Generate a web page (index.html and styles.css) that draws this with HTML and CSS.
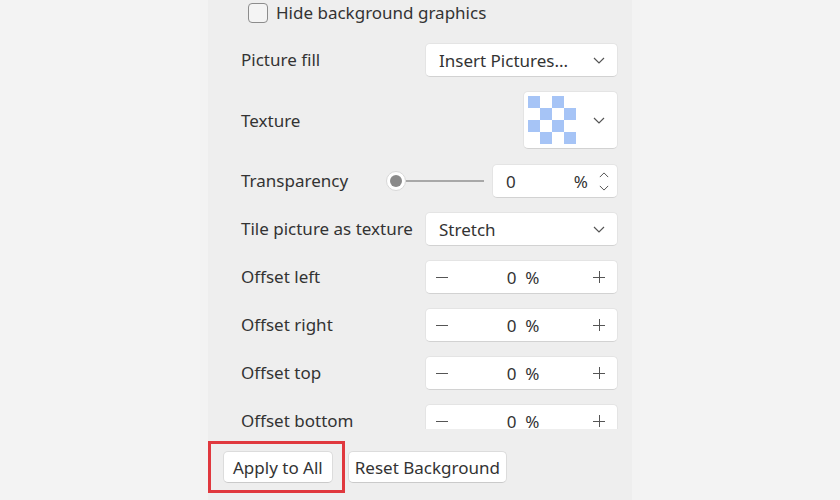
FILE: index.html
```html
<!DOCTYPE html>
<html>
<head>
<meta charset="utf-8">
<link rel="stylesheet" href="styles.css">
</head>
<body>
<div class="panel">
  <div class="scroll">
    <div class="check-row">
      <span class="checkbox"></span>
      <span class="check-label">Hide background graphics</span>
    </div>
    <div class="form">
      <div class="row">
        <div class="label">Picture fill</div>
        <div class="select wide"><span>Insert Pictures...</span><svg class="chev" viewBox="0 0 12 7"><path d="M1 1l5 5 5-5"/></svg></div>
      </div>

      <div class="row">
        <div class="label">Texture</div>
        <div class="select texture">
          <div class="checker">
            <b></b><i></i><b></b><i></i>
            <i></i><b></b><i></i><b></b>
            <b></b><i></i><b></b><i></i>
            <i></i><b></b><i></i><b></b>
          </div>
          <svg class="chev" viewBox="0 0 12 7"><path d="M1 1l5 5 5-5"/></svg>
        </div>
      </div>

      <div class="row">
        <div class="label">Transparency</div>
        <div class="trans">
          <div class="slider"><span class="knob"></span><span class="track"></span></div>
          <div class="spin">
            <span class="val">0</span><span class="pct">%</span>
            <span class="arrows">
              <svg viewBox="0 0 12 7"><path d="M1 6l5-5 5 5"/></svg>
              <svg viewBox="0 0 12 7"><path d="M1 1l5 5 5-5"/></svg>
            </span>
          </div>
        </div>
      </div>

      <div class="row">
        <div class="label">Tile picture as texture</div>
        <div class="select wide"><span>Stretch</span><svg class="chev" viewBox="0 0 12 7"><path d="M1 1l5 5 5-5"/></svg></div>
      </div>

      <div class="row">
        <div class="label">Offset left</div>
        <div class="stepper"><span class="minus"></span><span class="num">0&nbsp;&nbsp;%</span><span class="plus"></span></div>
      </div>

      <div class="row">
        <div class="label">Offset right</div>
        <div class="stepper"><span class="minus"></span><span class="num">0&nbsp;&nbsp;%</span><span class="plus"></span></div>
      </div>

      <div class="row">
        <div class="label">Offset top</div>
        <div class="stepper"><span class="minus"></span><span class="num">0&nbsp;&nbsp;%</span><span class="plus"></span></div>
      </div>

      <div class="row">
        <div class="label">Offset bottom</div>
        <div class="stepper"><span class="minus"></span><span class="num">0&nbsp;&nbsp;%</span><span class="plus"></span></div>
      </div>
    </div>
  </div>
  <div class="footer">
    <div class="highlight"><button class="btn">Apply to All</button></div>
    <button class="btn reset">Reset Background</button>
  </div>
</div>
</body>
</html>
```
FILE: styles.css
```css
* { box-sizing: border-box; }
html, body { margin: 0; padding: 0; }
body {
  background: #f3f3f3;
  font-family: "Noto Sans", "Open Sans", sans-serif;
  font-size: 17px;
  color: #333;
  width: 840px;
  height: 500px;
  overflow: hidden;
}
.panel {
  margin-left: 208px;
  width: 424px;
  height: 500px;
  background: #eeeeee;
  display: flex;
  flex-direction: column;
}
.scroll {
  height: 429px;
  overflow: hidden;
  padding: 3px 14px 0 33px;
}
.check-row {
  display: flex;
  align-items: center;
  gap: 8px;
  padding-left: 7px;
  height: 20px;
  margin-bottom: 20px;
}
.checkbox {
  width: 20px;
  height: 20px;
  border: 1.5px solid #8c8c8c;
  border-radius: 4px;
  background: #f4f4f4;
  flex: none;
}
.check-label { line-height: 20px; white-space: nowrap; }
.form {
  display: flex;
  flex-direction: column;
  gap: 14px;
}
.row {
  display: flex;
  align-items: center;
  justify-content: space-between;
}
.label { line-height: 20px; white-space: nowrap; }
.select, .spin, .stepper {
  background: #fff;
  border: 1px solid #e4e4e4;
  border-bottom-color: #d2d2d2;
  border-radius: 5px;
  height: 34px;
  display: flex;
  align-items: center;
  flex: none;
}
.select.wide {
  width: 193px;
  padding: 0 12px 0 13px;
  justify-content: space-between;
}
.chev {
  width: 12px;
  height: 7px;
  fill: none;
  stroke: #555;
  stroke-width: 1.2;
}
.select.texture {
  width: 95px;
  height: 58px;
  margin-bottom: 1px;
  padding: 0 12px 0 4px;
  justify-content: space-between;
}
.checker {
  display: grid;
  grid-template-columns: repeat(4, 12px);
  grid-template-rows: repeat(4, 12px);
}
.checker b { background: #a6c4f6; }
.checker i { background: transparent; }
.trans {
  display: flex;
  align-items: center;
  gap: 8px;
}
.slider {
  display: flex;
  align-items: center;
  width: 98px;
}
.knob {
  width: 20px;
  height: 20px;
  border-radius: 50%;
  background: #fff;
  border: 1px solid #d8d8d8;
  display: flex;
  align-items: center;
  justify-content: center;
  flex: none;
}
.knob::after {
  content: "";
  width: 12px;
  height: 12px;
  border-radius: 50%;
  background: #8a8a8a;
}
.track {
  flex: 1;
  height: 2px;
  background: #a8a8a8;
}
.spin {
  width: 126px;
  padding: 0 8px 0 13px;
}
.spin .val { flex: 1; }
.spin .pct { margin-right: 11px; }
.arrows {
  display: flex;
  flex-direction: column;
  gap: 7px;
}
.arrows svg {
  width: 10px;
  height: 6px;
  fill: none;
  stroke: #555;
  stroke-width: 1.2;
  display: block;
}
.stepper {
  width: 193px;
  padding: 0 12px 0 10px;
  justify-content: space-between;
}
.num { padding-left: 5px; }
.minus, .plus {
  position: relative;
  width: 12px;
  height: 12px;
}
.minus::before, .plus::before, .plus::after {
  content: "";
  position: absolute;
  background: #555;
}
.minus::before, .plus::before {
  left: 0; right: 0; top: 6px; height: 1px;
}
.plus::after {
  top: 0; bottom: 0; left: 6px; width: 1px;
}
.footer {
  margin-top: 12px;
  display: flex;
  align-items: flex-start;
  gap: 3px;
}
.highlight {
  border: 3px solid #e0383e;
  padding: 7px 9px 7px 12px;
}
.btn {
  font-family: "Noto Sans", "Open Sans", sans-serif;
  font-size: 17px;
  color: #333;
  background: #fff;
  border: 1px solid #dcdcdc;
  border-bottom-color: #cacaca;
  border-radius: 5px;
  height: 32px;
  padding: 0 9px;
  margin: 0;
}
.footer > .btn { margin-top: 10px; }
.btn.reset { padding: 0 6px; }
```
